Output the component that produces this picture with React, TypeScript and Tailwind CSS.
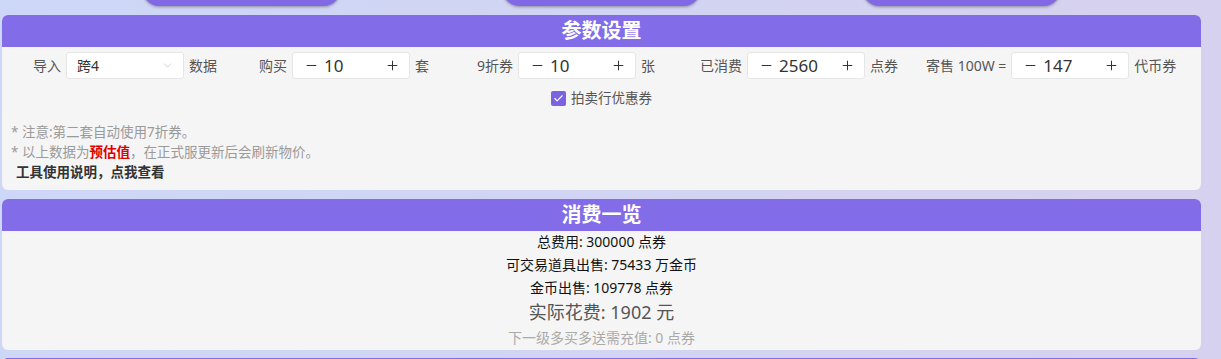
import { ChevronDown, Minus, Plus, Check } from 'lucide-react';

const font = { fontFamily: '"Noto Sans", "Noto Sans CJK SC", sans-serif' };

function Stepper({ value }: { value: string }) {
  return (
    <div className="flex h-[27px] w-[118px] items-center rounded-[3px] border border-[#e6e6e6] bg-white pl-[11px] pr-[9px] text-[#333]">
      <Minus className="h-[15px] w-[15px]" strokeWidth={1.6} />
      <span className="ml-[5px] flex-1 text-[17px] leading-none">{value}</span>
      <Plus className="h-[15px] w-[15px]" strokeWidth={1.6} />
    </div>
  );
}

function Field({ label, value, unit, className = '' }: { label: string; value: string; unit: string; className?: string }) {
  return (
    <div className={`flex items-center gap-[5px] ${className}`}>
      <span>{label}</span>
      <Stepper value={value} />
      <span>{unit}</span>
    </div>
  );
}

function PanelHeader({ title }: { title: string }) {
  return (
    <div className="flex h-[32px] items-center justify-center rounded-t-[6px] bg-[#826ce8] text-[20px] font-bold leading-none text-white">
      {title}
    </div>
  );
}

export default function App() {
  return (
    <div className="h-[359px] overflow-hidden bg-gradient-to-r from-[#cdd7f7] to-[#d6d1ee]" style={font}>
      {/* top tab buttons */}
      <div className="relative h-[15px]">
        <div className="absolute left-[143px] top-[-20px] h-[26px] w-[197px] rounded-b-[16px] bg-[#8169e6] shadow-[0_1px_3px_rgba(0,0,0,0.35)]" />
        <div className="absolute left-[503px] top-[-20px] h-[26px] w-[197px] rounded-b-[16px] bg-[#8169e6] shadow-[0_1px_3px_rgba(0,0,0,0.35)]" />
        <div className="absolute left-[863px] top-[-20px] h-[26px] w-[197px] rounded-b-[16px] bg-[#8169e6] shadow-[0_1px_3px_rgba(0,0,0,0.35)]" />
      </div>

      <div className="ml-[2px] w-[1199px]">
        {/* 参数设置 */}
        <section className="rounded-[6px] bg-[#f5f5f5]">
          <PanelHeader title="参数设置" />
          <div className="pb-[8px] pt-[5px] text-[14px] text-[#555]">
            <div className="flex items-center">
              <div className="ml-[31px] flex items-center gap-[5px]">
                <span>导入</span>
                <div className="flex h-[27px] w-[118px] items-center rounded-[3px] border border-[#e6e6e6] bg-white pl-[10px] pr-[9px] text-[#333]">
                  <span className="flex-1 text-[14px] leading-none">跨4</span>
                  <ChevronDown className="h-[13px] w-[13px] text-[#c4c4c4]" strokeWidth={1.5} />
                </div>
                <span>数据</span>
              </div>
              <Field className="ml-[42px]" label="购买" value="10" unit="套" />
              <Field className="ml-[48px]" label="9折券" value="10" unit="张" />
              <Field className="ml-[45px]" label="已消费" value="2560" unit="点券" />
              <Field className="ml-[28px]" label="寄售 100W =" value="147" unit="代币券" />
            </div>
            <div className="mt-[10px] flex h-[18px] items-center justify-center gap-[5px]">
              <span className="flex h-[15px] w-[15px] items-center justify-center rounded-[2px] bg-[#7b63e0]">
                <Check className="h-[11px] w-[11px] text-white" strokeWidth={2.5} />
              </span>
              <span className="text-[13.5px]">拍卖行优惠券</span>
            </div>
            <div className="mt-[15px] pl-[9px] text-[13.5px] leading-[20px]">
              <p className="text-[#9a9a9a]">* 注意:第二套自动使用7折券。</p>
              <p className="text-[#9a9a9a]">
                * 以上数据为<b className="text-[#e00000]">预估值</b>，在正式服更新后会刷新物价。
              </p>
              <p className="pl-[5px] font-bold text-[#333]">工具使用说明，点我查看</p>
            </div>
          </div>
        </section>

        {/* 消费一览 */}
        <section className="mt-[9px] rounded-[6px] bg-[#f5f5f5]">
          <PanelHeader title="消费一览" />
          <div className="text-center text-[14px] text-[#111]">
            <p className="leading-[22px]">总费用: 300000 点券</p>
            <p className="leading-[23px]">可交易道具出售: 75433 万金币</p>
            <p className="leading-[23px]">金币出售: 109778 点券</p>
            <p className="text-[18px] leading-[27px] text-[#555]">实际花费: 1902 元</p>
            <p className="leading-[24px] text-[#aaa]">下一级多买多送需充值: 0 点券</p>
          </div>
        </section>

        <section className="mt-[8px] h-[40px] rounded-t-[6px] bg-[#826ce8]" />
      </div>
    </div>
  );
}
